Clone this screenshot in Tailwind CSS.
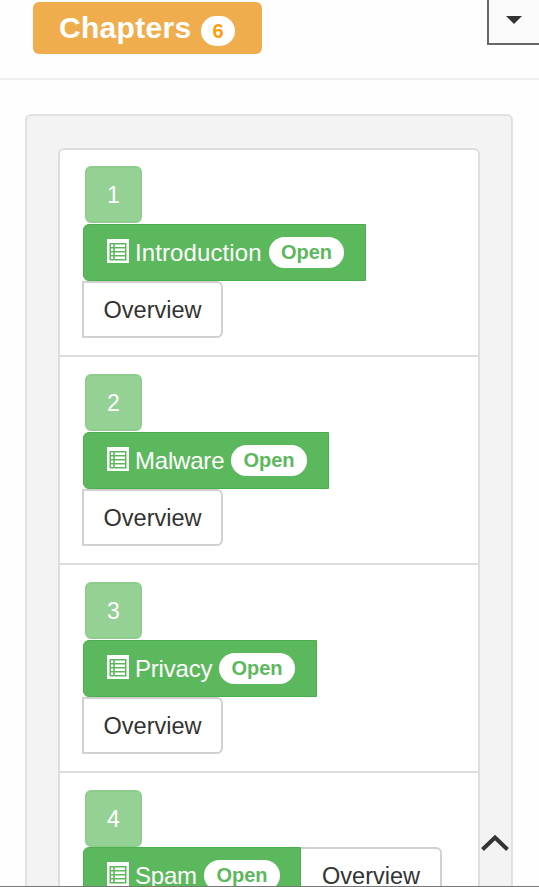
<!DOCTYPE html>
<html lang="en">
<head>
<meta charset="utf-8">
<title>Chapters</title>
<script src="https://cdn.jsdelivr.net/npm/@tailwindcss/browser@4"></script>
</head>
<body class="relative h-[887px] overflow-hidden bg-[#fefefe] font-['Liberation_Sans',Arial,sans-serif] text-2xl text-[#333]">
<svg class="hidden">
  <symbol id="list" viewBox="0 0 22 24">
    <path fill="currentColor" fill-rule="evenodd" d="M0 0H22V24H0ZM2.5 4V21.5H19.5V4Z"/>
    <path fill="currentColor" d="M4 5.5h2.2v2.4H4zM4 9.5h2.2v2.4H4zM4 13.5h2.2v2.4H4zM4 17.5h2.2v2.4H4zM7.8 5.5h10.2v2.4H7.8zM7.8 9.5h10.2v2.4H7.8zM7.8 13.5h10.2v2.4H7.8zM7.8 17.5h10.2v2.4H7.8z"/>
  </symbol>
</svg>
<header class="flex h-20 items-start justify-between border-b-2 border-[#eee] pl-[33px]">
  <h1 class="mt-[2px] flex h-[52px] w-[229px] items-center rounded-md bg-[#f0ad4e] pl-[26px] text-[30px] leading-none font-bold tracking-[0.3px] text-white">
    <span class="w-[142px]">Chapters</span>
    <span class="mt-[6px] flex h-[30px] w-[34px] items-center justify-center rounded-full bg-white text-xl leading-none tracking-normal text-[#ff9d0a]">6</span>
  </h1>
  <button class="flex h-[45px] w-[52px] items-start justify-center border-b-2 border-l-2 border-[#666] bg-[#fafafa] pt-4" aria-label="Menu">
    <svg class="h-2 w-4" viewBox="0 0 16 8"><path fill="#333" d="M0 0h16L8 8z"/></svg>
  </button>
</header>
<main class="mt-[34px] ml-[25px] h-[773px] w-[488px] overflow-hidden rounded-t-md border-2 border-b-0 border-[#e1e1e1] bg-[#f3f3f3] pt-8 pl-[31px]">
  <ol class="w-[422px] rounded-md border-2 border-[#ddd] bg-white">
    <li class="flex h-[207px] flex-col items-start border-b-2 border-[#ddd] pt-4 pl-[22px]">
      <span class="ml-[3px] flex size-[57px] items-center justify-center rounded-md border-2 border-[#8fcd8f] bg-[#95d195] pt-[2px] text-[23px] text-white">1</span>
      <a class="ml-px mt-px flex h-[57px] w-[283px] items-center rounded-l-md border border-[#4cae4c] bg-[#5cb85c] pl-[23px] text-white"><svg class="mr-[6px] mb-[3px] h-6 w-[22px] shrink-0"><use href="#list"/></svg><span class="w-[134px] tracking-[0.1px]">Introduction</span><span class="flex h-[31px] w-[75px] items-center justify-center rounded-full bg-white pb-px text-xl font-bold text-[#5cb85c]">Open</span></a>
      <a class="flex h-[57px] w-[141px] items-center justify-center rounded-r-md border-2 border-[#d0d0d0] bg-white pt-[2px] text-[23.5px]">Overview</a>
    </li>
    <li class="flex h-[208px] flex-col items-start border-b-2 border-[#ddd] pt-[17px] pl-[22px]">
      <span class="ml-[3px] flex size-[57px] items-center justify-center rounded-md border-2 border-[#8fcd8f] bg-[#95d195] pt-[2px] text-[23px] text-white">2</span>
      <a class="ml-px mt-px flex h-[57px] w-[246px] items-center rounded-l-md border border-[#4cae4c] bg-[#5cb85c] pl-[23px] text-white"><svg class="mr-[6px] mb-[3px] h-6 w-[22px] shrink-0"><use href="#list"/></svg><span class="w-[96px] tracking-[-0.2px]">Malware</span><span class="flex h-[31px] w-[76px] items-center justify-center rounded-full bg-white pb-px text-xl font-bold text-[#5cb85c]">Open</span></a>
      <a class="flex h-[57px] w-[141px] items-center justify-center rounded-r-md border-2 border-[#d0d0d0] bg-white pt-[2px] text-[23.5px]">Overview</a>
    </li>
    <li class="flex h-[208px] flex-col items-start border-b-2 border-[#ddd] pt-[17px] pl-[22px]">
      <span class="ml-[3px] flex size-[57px] items-center justify-center rounded-md border-2 border-[#8fcd8f] bg-[#95d195] pt-[2px] text-[23px] text-white">3</span>
      <a class="ml-px mt-px flex h-[57px] w-[234px] items-center rounded-l-md border border-[#4cae4c] bg-[#5cb85c] pl-[23px] text-white"><svg class="mr-[6px] mb-[3px] h-6 w-[22px] shrink-0"><use href="#list"/></svg><span class="w-[84px] tracking-[-0.2px]">Privacy</span><span class="flex h-[31px] w-[76px] items-center justify-center rounded-full bg-white pb-px text-xl font-bold text-[#5cb85c]">Open</span></a>
      <a class="flex h-[57px] w-[141px] items-center justify-center rounded-r-md border-2 border-[#d0d0d0] bg-white pt-[2px] text-[23.5px]">Overview</a>
    </li>
    <li class="flex h-[208px] flex-col items-start pt-[17px] pl-[22px]">
      <span class="ml-[3px] flex size-[57px] items-center justify-center rounded-md border-2 border-[#8fcd8f] bg-[#95d195] pt-[2px] text-[23px] text-white">4</span>
      <div class="ml-px flex">
        <a class="flex h-[57px] w-[218px] items-center rounded-l-md border border-[#4cae4c] bg-[#5cb85c] pl-[23px] text-white"><svg class="mr-[6px] mb-[3px] h-6 w-[22px] shrink-0"><use href="#list"/></svg><span class="w-[69px] tracking-[-0.2px]">Spam</span><span class="flex h-[31px] w-[76px] items-center justify-center rounded-full bg-white pb-px text-xl font-bold text-[#5cb85c]">Open</span></a>
        <a class="flex h-[57px] w-[141px] items-center justify-center rounded-r-md border-2 border-l-0 border-[#d0d0d0] bg-white pt-[2px] pl-px text-[23.5px]">Overview</a>
      </div>
    </li>
  </ol>
</main>
<svg class="absolute top-[834px] left-[481px] h-[18px] w-7" viewBox="0 0 28 18" fill="none" stroke="#333" stroke-width="4"><path d="M1.5 15.5L14 3.5L26.5 15.5"/></svg>
<div class="absolute bottom-0 left-0 h-px w-full bg-[#777]"></div>
</body>
</html>
